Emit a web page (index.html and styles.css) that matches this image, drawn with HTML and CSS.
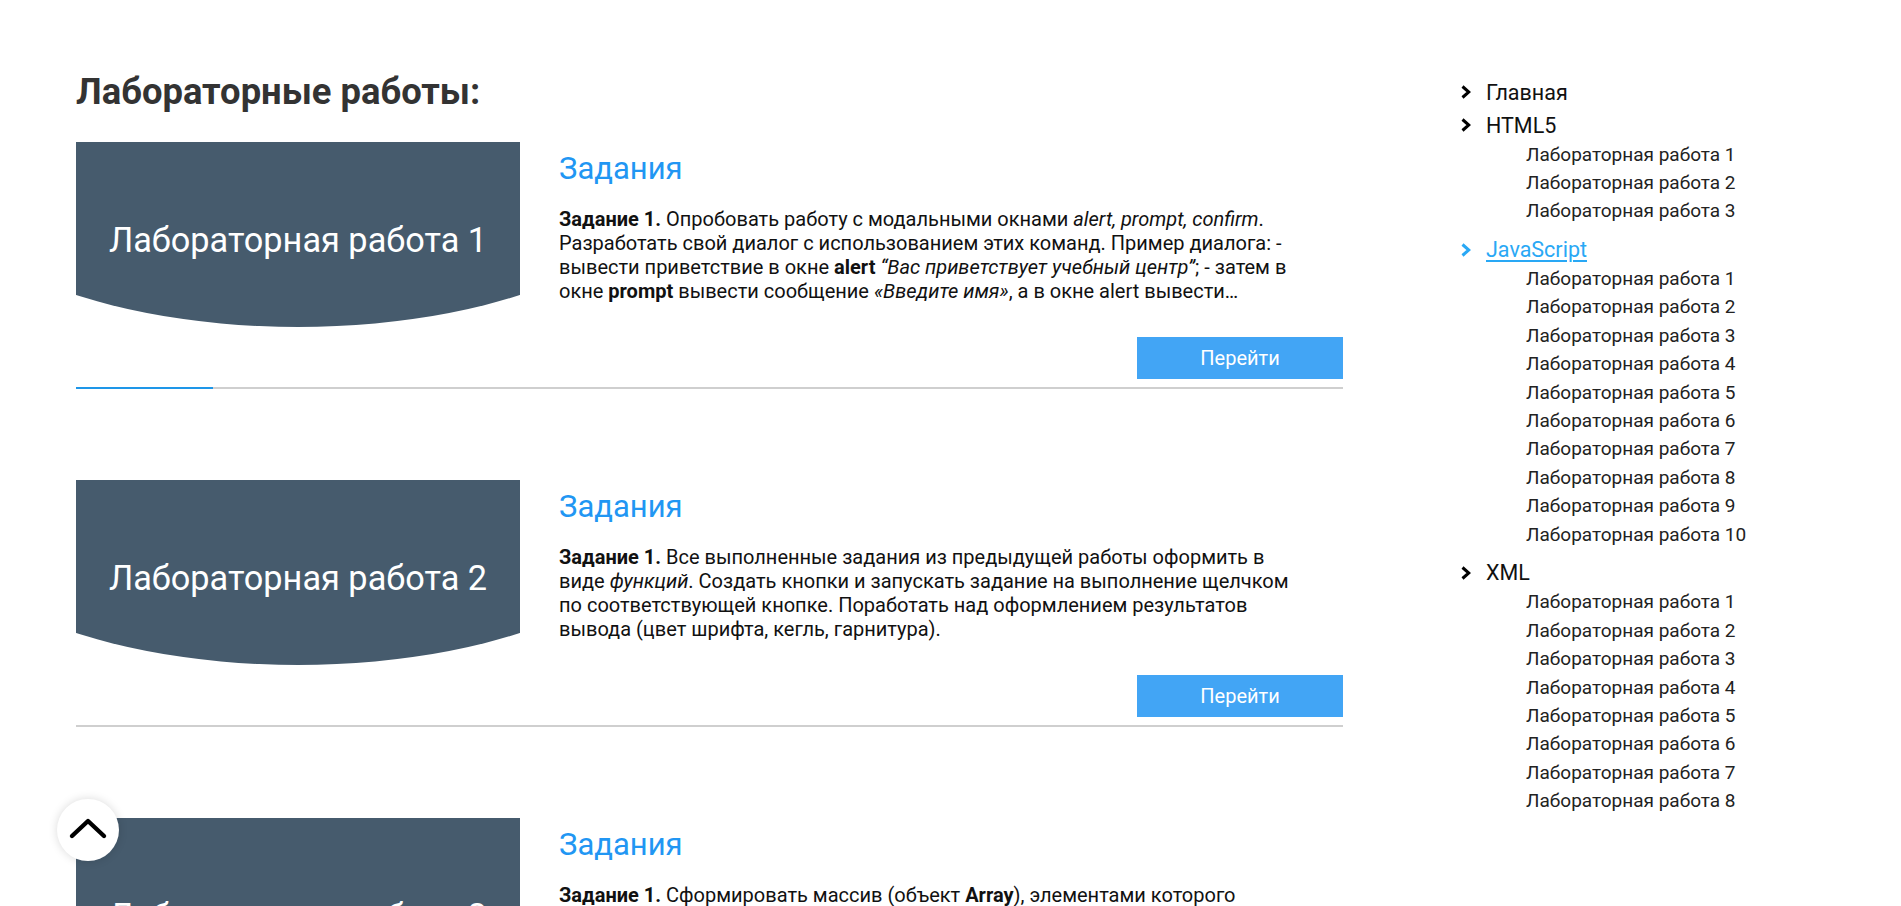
FILE: index.html
```html
<!DOCTYPE html>
<html lang="ru">
<head>
<meta charset="utf-8">
<title>Лабораторные работы</title>
<link rel="stylesheet" href="styles.css">
</head>
<body>
<div class="page">
  <main class="main">
    <h1 class="title">Лабораторные работы:</h1>

    <section class="lab">
      <div class="lab-row">
        <div class="lab-img"><span>Лабораторная работа 1</span></div>
        <div class="lab-body">
          <h3 class="lab-head">Задания</h3>
          <p class="lab-text"><b>Задание 1.</b> Опробовать работу с модальными окнами <i>alert, prompt, confirm</i>.<br>Разработать свой диалог с использованием этих команд. Пример диалога: -<br>вывести приветствие в окне <b>alert</b> <i>“Вас приветствует учебный центр”</i>; - затем в<br>окне <b>prompt</b> вывести сообщение <i>«Введите имя»</i>, а в окне alert вывести приветствие с введённым именем; - в окне <b>confirm</b> спросить, желает ли пользователь продолжить.</p>
          <a class="lab-btn" href="#">Перейти</a>
        </div>
      </div>
      <div class="sep"><span class="sep-bar"></span></div>
    </section>

    <section class="lab">
      <div class="lab-row">
        <div class="lab-img"><span>Лабораторная работа 2</span></div>
        <div class="lab-body">
          <h3 class="lab-head">Задания</h3>
          <p class="lab-text"><b>Задание 1.</b> Все выполненные задания из предыдущей работы оформить в<br>виде <i>функций</i>. Создать кнопки и запускать задание на выполнение щелчком<br>по соответствующей кнопке. Поработать над оформлением результатов<br>вывода (цвет шрифта, кегль, гарнитура).</p>
          <a class="lab-btn" href="#">Перейти</a>
        </div>
      </div>
      <div class="sep"></div>
    </section>

    <section class="lab">
      <div class="lab-row">
        <div class="lab-img"><span>Лабораторная работа 3</span></div>
        <div class="lab-body">
          <h3 class="lab-head">Задания</h3>
          <p class="lab-text"><b>Задание 1.</b> Сформировать массив (объект <b>Array</b>), элементами которого<br>являются названия дней недели. Вывести элементы массива на страницу<br>в виде списка, используя цикл.</p>
          <a class="lab-btn" href="#">Перейти</a>
        </div>
      </div>
      <div class="sep"></div>
    </section>
  </main>

  <aside class="side">
    <ul class="nav">
      <li class="nav-item">
        <a class="nav-link" href="#"><svg class="chev" viewBox="0 0 10 14" width="10" height="14"><polyline points="1.5,1.5 7.8,7 1.5,12.5" fill="none" stroke="currentColor" stroke-width="3"/></svg>Главная</a>
      </li>
      <li class="nav-item">
        <a class="nav-link" href="#"><svg class="chev" viewBox="0 0 10 14" width="10" height="14"><polyline points="1.5,1.5 7.8,7 1.5,12.5" fill="none" stroke="currentColor" stroke-width="3"/></svg>HTML5</a>
        <ul class="sub">
          <li>Лабораторная работа 1</li>
          <li>Лабораторная работа 2</li>
          <li>Лабораторная работа 3</li>
        </ul>
      </li>
      <li class="nav-item active">
        <a class="nav-link" href="#"><svg class="chev" viewBox="0 0 10 14" width="10" height="14"><polyline points="1.5,1.5 7.8,7 1.5,12.5" fill="none" stroke="currentColor" stroke-width="3"/></svg><span class="u">JavaScript</span></a>
        <ul class="sub">
          <li>Лабораторная работа 1</li>
          <li>Лабораторная работа 2</li>
          <li>Лабораторная работа 3</li>
          <li>Лабораторная работа 4</li>
          <li>Лабораторная работа 5</li>
          <li>Лабораторная работа 6</li>
          <li>Лабораторная работа 7</li>
          <li>Лабораторная работа 8</li>
          <li>Лабораторная работа 9</li>
          <li>Лабораторная работа 10</li>
        </ul>
      </li>
      <li class="nav-item">
        <a class="nav-link" href="#"><svg class="chev" viewBox="0 0 10 14" width="10" height="14"><polyline points="1.5,1.5 7.8,7 1.5,12.5" fill="none" stroke="currentColor" stroke-width="3"/></svg>XML</a>
        <ul class="sub">
          <li>Лабораторная работа 1</li>
          <li>Лабораторная работа 2</li>
          <li>Лабораторная работа 3</li>
          <li>Лабораторная работа 4</li>
          <li>Лабораторная работа 5</li>
          <li>Лабораторная работа 6</li>
          <li>Лабораторная работа 7</li>
          <li>Лабораторная работа 8</li>
        </ul>
      </li>
    </ul>
  </aside>
</div>

<a class="to-top" href="#"><svg viewBox="0 0 40 24" width="40" height="24"><polyline points="4,20 20,5 36,20" fill="none" stroke="#000" stroke-width="4.4" stroke-linecap="round" stroke-linejoin="round"/></svg></a>
</body>
</html>
```
FILE: styles.css
```css
* { box-sizing: border-box; }
html, body { margin: 0; padding: 0; }
html { scrollbar-width: none; }
body::-webkit-scrollbar { display: none; }
body {
  font-family: Roboto, "Liberation Sans", sans-serif;
  color: #222;
  background: #fff;
}
.page {
  display: flex;
  align-items: flex-start;
  padding-left: 76px;
}
.main {
  width: 1267px;
  flex-shrink: 0;
}
.title {
  margin: 70px 0 28px;
  font-size: 36.4px;
  line-height: 44px;
  font-weight: 700;
  color: #333;
}
.lab { margin-bottom: 91px; }
.lab-row {
  display: flex;
  gap: 39px;
}
.lab-img {
  width: 444px;
  height: 185px;
  flex-shrink: 0;
  background: #465b6d;
  clip-path: ellipse(395px 185px at 50% 0);
  display: flex;
  align-items: center;
  justify-content: center;
  padding-top: 11px;
  color: #fff;
  font-size: 34.3px;
  line-height: 40px;
}
.lab-body {
  flex: 1;
  display: flex;
  flex-direction: column;
  min-width: 0;
}
.lab-head {
  margin: 9px 0 20px;
  font-size: 31px;
  line-height: 36px;
  font-weight: 400;
  color: #2196f3;
}
.lab-text {
  margin: 0;
  max-width: 770px;
  font-size: 20px;
  line-height: 24px;
  height: 96px;
  color: #111;
  display: -webkit-box;
  -webkit-line-clamp: 4;
  -webkit-box-orient: vertical;
  overflow: hidden;
}
.lab-text b { font-weight: 700; }
.lab-btn {
  align-self: flex-end;
  margin-top: 34px;
  width: 206px;
  height: 42px;
  display: flex;
  align-items: center;
  justify-content: center;
  background: #42a5f5;
  color: #fff;
  text-decoration: none;
  font-size: 20px;
}
.sep {
  margin-top: 8px;
  height: 2px;
  background: #cfcfcf;
  display: flex;
}
.sep-bar {
  width: 137px;
  background: #1e96e8;
}
.side {
  margin-left: 118px;
  padding-top: 78px;
}
.nav, .sub {
  list-style: none;
  margin: 0;
  padding: 0;
}
.nav-item { margin-bottom: 4.5px; }
.nav-link {
  display: flex;
  align-items: center;
  height: 28.5px;
  font-size: 21.5px;
  color: #111;
  text-decoration: none;
}
.chev {
  margin-right: 15px;
  color: #000;
}
.active .nav-link, .active .chev { color: #29a8f5; }
.u { text-decoration: underline; text-underline-offset: 3px; }
.sub {
  margin-top: 1px;
  margin-bottom: 9.5px;
  padding-left: 65px;
}
.sub li {
  font-size: 19px;
  line-height: 28.43px;
  color: #222;
}
.to-top {
  position: fixed;
  left: 57px;
  bottom: 45px;
  width: 62px;
  height: 62px;
  border-radius: 50%;
  background: #fff;
  box-shadow: 0 0 10px rgba(0,0,0,0.15);
  display: flex;
  align-items: center;
  justify-content: center;
  padding-bottom: 4px;
}
```
